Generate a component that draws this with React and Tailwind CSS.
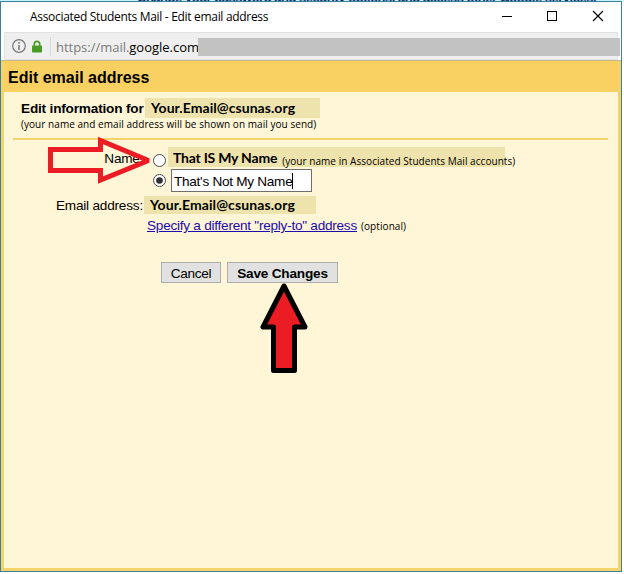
const arial = "font-['Liberation_Sans',Arial,sans-serif]";
const segoe = "font-['Open_Sans','Noto_Sans',sans-serif]";
const calibri = "font-['Lato',sans-serif]";

function TitleBar() {
  return (
    <div className="flex h-[30px] items-center pl-[29px]">
      <span className={`${segoe} grow text-[12px] tracking-[-0.31px] text-black`}>
        Associated Students Mail - Edit email address
      </span>
      <svg width="120" height="30" className="shrink-0" fill="none" stroke="#000" shapeRendering="crispEdges">
        <path d="M1 14.5h10M46.500 9.500h9v9h-9z" />
        <path d="M92 9l10 10M102 9l-10 10" shapeRendering="auto" strokeWidth="1.2" />
      </svg>
    </div>
  );
}

function UrlBar() {
  return (
    <div className="ml-[3px] flex h-[28px] w-[614px] items-center border border-[#e2e2e2] bg-[#efefef]">
      <svg width="14" height="14" className="ml-[7px] shrink-0" fill="none" stroke="#777">
        <circle cx="7" cy="7" r="6.3" strokeWidth="1.2" />
        <path d="M7 6v5M7 3v1.700" strokeWidth="1.500" />
      </svg>
      <svg width="10" height="13" className="ml-[6px] shrink-0" fill="none">
        <path d="M2.300 6V4a2.700 2.700 0 0 1 5.400 0v2" stroke="#4a9b27" strokeWidth="1.700" />
        <rect y="5.500" width="10" height="7" rx="0.700" fill="#4a9b27" />
      </svg>
      <div className="ml-[8px] h-[19px] w-px shrink-0 bg-[#d8d8d8]" />
      <div className={`${segoe} mt-[3px] ml-[5px] w-[142px] shrink-0 overflow-hidden text-[13px] tracking-[-0.02px] whitespace-nowrap text-[#7b7b7b]`}>
        https://mail.<span className="text-black">google.com</span>
      </div>
      <div className="mt-px h-[18px] w-[422px] shrink-0 bg-[#c2c2c2]" />
    </div>
  );
}

function Radio({ checked }) {
  return (
    <svg width="13" height="13" className="shrink-0">
      <circle cx="6.500" cy="6.500" r="6" fill="#fff" stroke="#4a4a4a" />
      {checked && <circle cx="6.500" cy="6.500" r="3.300" fill="#303030" />}
    </svg>
  );
}

export default function App() {
  return (
    <div className="relative h-[574px] w-[624px] overflow-hidden bg-white">
      <div className="h-px bg-[#c5f4fb]">
        <div className={`${arial} ml-[137px] flex h-[2px] items-end overflow-hidden text-[13px] font-bold tracking-[-0.48px] whitespace-nowrap text-[#0b2a6b]`}>
          <span className="leading-[9px]">Change your password and security options, and access other Google services.</span>
        </div>
      </div>
      <div className="relative h-[571px] w-[622px] border border-[#3f7f9c] bg-white">
        <TitleBar />
        <UrlBar />
        <div className="h-px bg-[#c4b98f]" />
        <div className={`${arial} h-[510px] border-x-[3px] border-b-[3px] border-[#f5d36b] bg-[#fff5d7] text-[13.6px] tracking-[-0.28px] text-black`}>
          <div className="flex h-[31px] items-center bg-[#f9d162] pl-[4px] text-[16px] font-bold tracking-normal">
            <span className="mt-[3px]">Edit email address</span>
          </div>
          <div className="mt-[6px] flex h-[20px] items-center pl-[17px]">
            <span className="mt-[3px] w-[124px] shrink-0 text-[13.6px] font-bold tracking-[-0.18px] whitespace-nowrap">Edit information for</span>
            <span className={`${calibri} h-[20px] w-[175px] bg-[#efe3ad] pl-[6px] text-[14px] leading-[20px] font-bold tracking-[0.06px]`}>Your.Email@csunas.org</span>
          </div>
          <div className={`${segoe} h-[14px] pl-[17px] text-[10px] leading-[12px] tracking-[0.05px] whitespace-nowrap`}>
            (your name and email address will be shown on mail you send)
          </div>
          <div className="mt-[6px] ml-[9px] h-[2px] w-[595px] bg-[#f5d36b]" />
          <div className="mt-[7px] flex h-[20px] items-center">
            <span className="mt-[4px] w-[139px] text-right">Name:</span>
            <span className="mt-[6px] ml-[10px]"><Radio /></span>
            <div className="ml-[2px] flex h-[20px] w-[337px] items-center bg-[#efe3ad] pl-[5px] whitespace-nowrap">
              <span className={`${calibri} mt-px text-[14px] font-bold tracking-[-0.22px]`}>That IS My Name</span>
              <span className={`${segoe} mt-[8px] ml-[5px] text-[10px] tracking-[0.05px]`}>(your name in Associated Students Mail accounts)</span>
            </div>
          </div>
          <div className="mt-[2px] flex h-[23px] items-center pl-[149px]">
            <Radio checked />
            <div className="ml-[5px] flex h-[23px] w-[141px] items-center border border-[#6f6f6f] bg-white pt-[3px] pl-[2px] tracking-[-0.28px] whitespace-nowrap">
              That's Not My Name<span className="mb-[2px] h-[16px] w-px bg-black" />
            </div>
          </div>
          <div className="mt-[4px] flex h-[18px] items-center">
            <span className="mt-[3px] w-[139px] text-right tracking-[-0.2px]">Email address:</span>
            <span className={`${calibri} ml-[1px] h-[18px] w-[172px] bg-[#efe3ad] pl-[6px] text-[14px] leading-[17px] font-bold tracking-[0.1px]`}>Your.Email@csunas.org</span>
          </div>
          <div className="flex h-[23px] items-center pl-[143px] whitespace-nowrap">
            <span className="mt-[2px] tracking-[-0.25px] text-[#1a0dab] underline">Specify a different "reply-to" address</span>
            <span className={`${segoe} mt-[2px] ml-[4px] text-[10px] tracking-[0.08px]`}>(optional)</span>
          </div>
          <div className="mt-[25px] flex gap-[6px] pl-[157px]">
            <button className="h-[21px] w-[60px] border border-[#adadad] bg-[#e1e1e1] pt-[2px] leading-[17px]">Cancel</button>
            <button className="h-[21px] w-[111px] border border-[#adadad] bg-[#e1e1e1] pt-[2px] leading-[17px] font-bold tracking-[-0.2px] whitespace-nowrap">Save Changes</button>
          </div>
        </div>
      </div>
      <svg className="absolute top-[136px] left-[46px]" width="110" height="48" fill="none" stroke="#ec1c24" strokeWidth="5" strokeLinejoin="round">
        <path d="M4.500 13.500H54.500V4.500L102.500 24.500L54.500 44V34.500H4.500z" strokeLinejoin="miter" strokeMiterlimit="2" />
      </svg>
      <svg className="absolute top-[280px] left-[258px]" width="52" height="96" fill="#ec1c24" stroke="#000" strokeWidth="5" strokeLinejoin="round">
        <path d="M26 6L5 47H15.500V90.500H36.500V47H47z" />
      </svg>
    </div>
  );
}
